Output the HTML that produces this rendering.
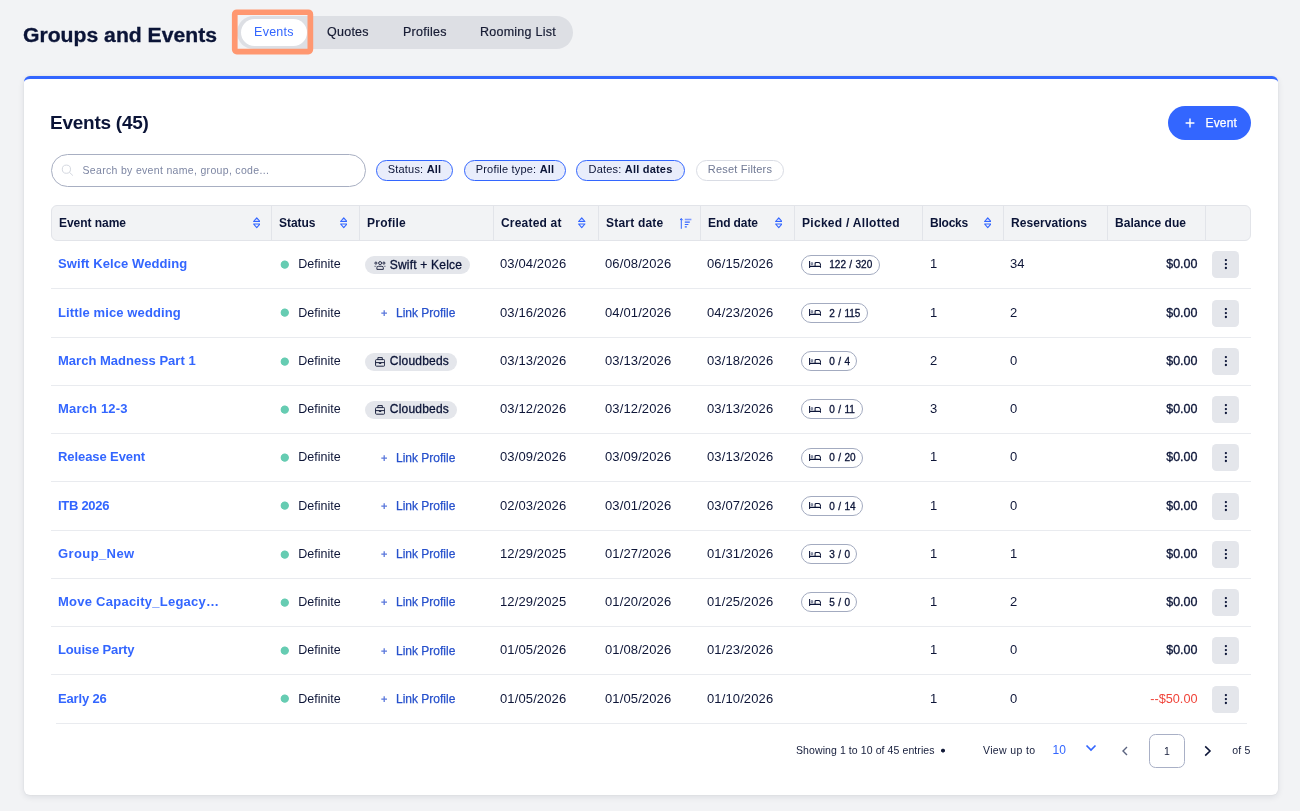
<!DOCTYPE html>
<html lang="en">
<head>
<meta charset="utf-8">
<title>Groups and Events</title>
<style>
*{box-sizing:border-box;margin:0;padding:0}
html,body{width:1300px;height:811px;overflow:hidden}
body{background:#f2f3f5;font-family:"Liberation Sans",sans-serif;color:#0b1437;position:relative}
#root{position:absolute;left:0;top:0;width:1300px;height:811px;will-change:transform}
.abs{position:absolute}
h1{position:absolute;left:23px;top:21px;font-size:20px;line-height:28px;font-weight:700;color:#0b1437;-webkit-text-stroke:.3px #0b1437;white-space:nowrap;transform-origin:0 50%;transform:translateY(-.5px) scaleX(1.058)}
.tabs{position:absolute;left:237px;top:16px;width:336px;height:33px;border-radius:17px;background:#dddfe4}
.tab{position:absolute;top:0;height:33px;line-height:32px;font-size:12.5px;letter-spacing:.25px;-webkit-text-stroke:.2px currentColor;color:#161b33;white-space:nowrap}
.tab.active{top:3px;left:3.7px;width:66.5px;height:27px;line-height:26px;border-radius:14px;background:#fff;color:#3366ff;text-align:center;-webkit-text-stroke:0}
.card{position:absolute;left:24px;top:76px;width:1254px;height:719px;background:#fff;border-top:3px solid #3366ff;border-radius:6px;box-shadow:0 2px 6px rgba(20,30,60,.10),0 0 2px rgba(20,30,60,.08)}
h2{position:absolute;left:50px;top:109px;font-size:19px;line-height:28px;font-weight:700;color:#0b1437;white-space:nowrap;letter-spacing:-.25px}
.btn{position:absolute;left:1168px;top:106px;width:83px;height:34px;border-radius:17px;background:#3366ff;color:#fff;font-size:12px;line-height:34px;-webkit-text-stroke:.25px #fff}
.search{position:absolute;left:51px;top:154px;width:315px;height:33px;border:1px solid #a8afc2;border-radius:16.5px;background:#fff}
.search span{position:absolute;left:30.5px;top:0;line-height:30.6px;font-size:10.5px;color:#7d86a3;white-space:nowrap;letter-spacing:.32px}
.chip{position:absolute;top:160px;height:21px;border:1px solid #3366ff;border-radius:11px;background:#e9edfb;font-size:11px;line-height:16.4px;letter-spacing:.2px;text-align:center;color:#0b1437;white-space:nowrap}
.chip b{font-weight:700}
.chip.reset{border-color:#d9dce4;background:#fff;color:#6f7893}

.thead{position:absolute;left:51px;top:205px;width:1200px;height:36px;background:#f2f3f5;border:1px solid #e2e4e9;border-radius:6px}
.thead .sep{position:absolute;top:0;width:1px;height:34px;background:#e2e4e9}
.th{position:absolute;top:0;line-height:34px;font-size:12px;font-weight:700;color:#0b1437;white-space:nowrap}
.srt{position:absolute;top:11px;width:7.5px;height:11.5px}
.srt.asc{width:12px;height:11px;top:11.7px}
.row{position:absolute;left:51px;width:1200px;height:48.25px;border-bottom:1px solid #e9ebef}
.row.last{border-bottom:0}
.row.last:after{content:"";position:absolute;left:5px;right:4px;bottom:0;height:1px;background:#e9ebef}
.row>*{position:absolute;white-space:nowrap}
.nm{left:7px;top:14.4px;font-size:13px;line-height:18px;font-weight:700;color:#3366ff}
.dot{left:228px;top:18px;width:11px;height:11px;background:radial-gradient(circle at 5.75px 5.6px,#66ccb2 3.7px,rgba(102,204,178,0) 4.5px)}
.c{top:14.4px;font-size:13px;line-height:18px;color:#0e1638;letter-spacing:.12px}
.st{left:247.3px;font-size:12.5px;letter-spacing:0}
.lp{left:345px;top:14.7px;font-size:12px;line-height:18px;color:#2751cc;-webkit-text-stroke:.25px #2751cc}
.lp svg{position:absolute;left:-15.2px;top:5.8px;width:6.4px;height:6.4px}
.pc{left:314px;top:15.25px;height:18px;border-radius:9px;background:#e4e6eb}
.pt{left:338.8px;top:14.7px;font-size:12px;line-height:18px;letter-spacing:.2px;color:#0b1437;-webkit-text-stroke:.3px #0b1437}
.pc .ic{position:absolute}
.pc .grp{left:9px;top:5.2px;width:12px;height:9px}
.pc .cas{left:10px;top:4.3px;width:10.2px;height:9.8px}
.pk{left:750px;top:13.6px;height:20px;border:1px solid #a3abc0;border-radius:10px}
.pkt{left:778.3px;top:15.3px;font-size:10px;line-height:18px;word-spacing:.6px;color:#0b1437;-webkit-text-stroke:.3px #0b1437}
.pk .bed{position:absolute;left:6.7px;top:5.4px;width:12.4px;height:7px}
.bal{right:53.5px;top:14.4px;font-size:12.5px;line-height:18px;color:#0b1437;-webkit-text-stroke:.3px #0b1437}
.bal.neg{color:#f0443a;-webkit-text-stroke:0;font-size:12.7px}
.kb{left:1161px;top:10.25px;width:27px;height:27px;border-radius:4.5px;background:#e4e6eb}
.kb svg{position:absolute;left:0;top:0;fill:#0b1437}
.pg{position:absolute;top:741.2px;font-size:10.5px;line-height:18px;color:#141c3a;white-space:nowrap}
.pgbox{position:absolute;left:1149px;top:734px;width:36px;height:33.5px;border:1px solid #a9b0c6;border-radius:6.5px;text-align:center;font-size:10.5px;line-height:32px;color:#141c3a}
</style>
</head>
<body>
<div id="root">
<h1>Groups and Events</h1>
<div class="tabs">
  <div class="tab active">Events</div>
  <div class="tab" style="left:90px">Quotes</div>
  <div class="tab" style="left:166px">Profiles</div>
  <div class="tab" style="left:243px">Rooming List</div>
</div>
<svg class="abs" style="left:226px;top:4px" width="94" height="56" viewBox="226 4 94 56"><rect x="234.75" y="12.25" width="75.6" height="39.3" rx="2" fill="none" stroke="#ff9770" stroke-width="5.7"/></svg>
<div class="card"></div>
<h2>Events (45)</h2>
<div class="btn"><svg class="abs" style="left:17px;top:12px" width="10" height="10" viewBox="0 0 10 10"><path d="M5 .6V9.4M.6 5H9.4" stroke="#fff" stroke-width="1.4" fill="none"/></svg><span class="abs" style="left:37.5px;letter-spacing:.15px">Event</span></div>
<div class="search"><svg class="abs" style="left:9px;top:9px" width="14" height="14" viewBox="0 0 14 14"><circle cx="5.4" cy="5.2" r="4.1" fill="none" stroke="#d4d8e0" stroke-width="1"/><path d="M8.4 8.3L11.9 11.6" stroke="#d4d8e0" stroke-width="1"/></svg><span>Search by event name, group, code...</span></div>
<div class="chip" style="left:376px;width:77px">Status: <b>All</b></div>
<div class="chip" style="left:464px;width:102px">Profile type: <b>All</b></div>
<div class="chip" style="left:576px;width:109px">Dates: <b>All dates</b></div>
<div class="chip reset" style="left:696px;width:88px">Reset Filters</div>
<!--TABLE-->
<div class="thead">
<span class="th" style="left:7px;letter-spacing:-0.04px">Event name</span>
<svg style="left:200.6px" class="srt" viewBox="0 0 7.5 11.5"><path d="M3.75 0.8 L6.9 4.5 H0.6 Z" fill="#c9d6ff" stroke="#3366ff" stroke-width="1.1" stroke-linejoin="round"/><path d="M3.75 10.7 L6.9 7 H0.6 Z" fill="none" stroke="#3366ff" stroke-width="1.1" stroke-linejoin="round"/></svg>
<i class="sep" style="left:219px"></i>
<span class="th" style="left:227px;letter-spacing:-0.04px">Status</span>
<svg style="left:287.9px" class="srt" viewBox="0 0 7.5 11.5"><path d="M3.75 0.8 L6.9 4.5 H0.6 Z" fill="#c9d6ff" stroke="#3366ff" stroke-width="1.1" stroke-linejoin="round"/><path d="M3.75 10.7 L6.9 7 H0.6 Z" fill="none" stroke="#3366ff" stroke-width="1.1" stroke-linejoin="round"/></svg>
<i class="sep" style="left:307px"></i>
<span class="th" style="left:315px;letter-spacing:0.23px">Profile</span>
<i class="sep" style="left:441px"></i>
<span class="th" style="left:449px;letter-spacing:0.2px">Created at</span>
<svg style="left:526.4px" class="srt" viewBox="0 0 7.5 11.5"><path d="M3.75 0.8 L6.9 4.5 H0.6 Z" fill="#c9d6ff" stroke="#3366ff" stroke-width="1.1" stroke-linejoin="round"/><path d="M3.75 10.7 L6.9 7 H0.6 Z" fill="none" stroke="#3366ff" stroke-width="1.1" stroke-linejoin="round"/></svg>
<i class="sep" style="left:546px"></i>
<span class="th" style="left:554px;letter-spacing:0.21px">Start date</span>
<svg style="left:628px" class="srt asc" viewBox="0 0 12 11"><path d="M1.3 10.8 V0.6 M0 2.2 L1.3 0.5 L2.6 2.2" fill="none" stroke="#3366ff" stroke-width="1"/><path d="M4.8 1.5 H11.4" stroke="#7f9bff" stroke-width="1.6"/><path d="M4.8 4.2 H9.8 M4.8 6.5 H8.4 M4.8 8.8 H6.8" fill="none" stroke="#3366ff" stroke-width="1.2"/></svg>
<i class="sep" style="left:648px"></i>
<span class="th" style="left:656px;letter-spacing:-0.1px">End date</span>
<svg style="left:722.6px" class="srt" viewBox="0 0 7.5 11.5"><path d="M3.75 0.8 L6.9 4.5 H0.6 Z" fill="#c9d6ff" stroke="#3366ff" stroke-width="1.1" stroke-linejoin="round"/><path d="M3.75 10.7 L6.9 7 H0.6 Z" fill="none" stroke="#3366ff" stroke-width="1.1" stroke-linejoin="round"/></svg>
<i class="sep" style="left:742px"></i>
<span class="th" style="left:750px;letter-spacing:0.29px">Picked / Allotted</span>
<i class="sep" style="left:870px"></i>
<span class="th" style="left:878px;letter-spacing:-0.22px">Blocks</span>
<svg style="left:931.8px" class="srt" viewBox="0 0 7.5 11.5"><path d="M3.75 0.8 L6.9 4.5 H0.6 Z" fill="#c9d6ff" stroke="#3366ff" stroke-width="1.1" stroke-linejoin="round"/><path d="M3.75 10.7 L6.9 7 H0.6 Z" fill="none" stroke="#3366ff" stroke-width="1.1" stroke-linejoin="round"/></svg>
<i class="sep" style="left:951px"></i>
<span class="th" style="left:959px;letter-spacing:0.06px">Reservations</span>
<i class="sep" style="left:1055px"></i>
<span class="th" style="left:1063px;letter-spacing:0.03px">Balance due</span>
<i class="sep" style="left:1153px"></i>
</div>
<div class="row" style="top:241.05px">
<a class="nm" style="letter-spacing:0.09px">Swift Kelce Wedding</a>
<i class="dot"></i><span class="c st">Definite</span>
<span class="pc" style="width:105px"><svg class="ic grp" viewBox="0 0 12 9"><g fill="none" stroke="#1d2440" stroke-width="0.95"><circle cx="6.1" cy="2.1" r="1.5"/><circle cx="1.9" cy="2.1" r="1.05"/><circle cx="9.9" cy="2.1" r="1.05"/><path d="M2.9 8.4 V6.7 Q2.9 5.3 4.3 5.3 H7.9 Q9.3 5.3 9.3 6.7 V8.4 Z"/><path d="M0.3 5.3 H2.3 M9.9 5.3 H11.6" stroke-width=".8" opacity=".7"/></g></svg></span><span class="pt">Swift + Kelce</span>
<span class="c" style="left:449px">03/04/2026</span><span class="c" style="left:554px">06/08/2026</span><span class="c" style="left:656px">06/15/2026</span>
<span class="pk" style="width:79px"><svg class="bed" viewBox="0 0 12.4 7"><g fill="none" stroke="#0b1437" stroke-width="1.05"><path d="M0.6 0.1 V6.9 M0.6 5.4 H11.8 V6.9 M6.1 5.4 V2.4 Q6.1 1.4 7.1 1.4 H9.6 Q10.6 1.4 11 2.3 L11.8 3.9 V5.4"/><path d="M2.1 1.7 H3.7 V3.7 H2.1 Z" stroke-width=".75" stroke="#59627f" fill="#c9cdd8"/></g></svg></span><span class="pkt">122 / 320</span>
<span class="c" style="left:879px">1</span><span class="c" style="left:959px">34</span>
<span class="bal">$0.00</span>
<span class="kb"><svg width="27" height="27" viewBox="0 0 27 27"><circle cx="13.9" cy="9.1" r="1.15"/><circle cx="13.9" cy="13.05" r="1.15"/><circle cx="13.9" cy="17" r="1.15"/></svg></span>
</div>
<div class="row" style="top:289.3px">
<a class="nm" style="letter-spacing:0.12px">Little mice wedding</a>
<i class="dot"></i><span class="c st">Definite</span>
<span class="lp"><svg viewBox="0 0 6.4 6.4"><path d="M3.2 .3V6.1M.3 3.2H6.1" stroke="#5b78dc" stroke-width="1.3" fill="none"/></svg>Link Profile</span>
<span class="c" style="left:449px">03/16/2026</span><span class="c" style="left:554px">04/01/2026</span><span class="c" style="left:656px">04/23/2026</span>
<span class="pk" style="width:67px"><svg class="bed" viewBox="0 0 12.4 7"><g fill="none" stroke="#0b1437" stroke-width="1.05"><path d="M0.6 0.1 V6.9 M0.6 5.4 H11.8 V6.9 M6.1 5.4 V2.4 Q6.1 1.4 7.1 1.4 H9.6 Q10.6 1.4 11 2.3 L11.8 3.9 V5.4"/><path d="M2.1 1.7 H3.7 V3.7 H2.1 Z" stroke-width=".75" stroke="#59627f" fill="#c9cdd8"/></g></svg></span><span class="pkt">2 / 115</span>
<span class="c" style="left:879px">1</span><span class="c" style="left:959px">2</span>
<span class="bal">$0.00</span>
<span class="kb"><svg width="27" height="27" viewBox="0 0 27 27"><circle cx="13.9" cy="9.1" r="1.15"/><circle cx="13.9" cy="13.05" r="1.15"/><circle cx="13.9" cy="17" r="1.15"/></svg></span>
</div>
<div class="row" style="top:337.55px">
<a class="nm" style="letter-spacing:0.02px">March Madness Part 1</a>
<i class="dot"></i><span class="c st">Definite</span>
<span class="pc" style="width:92px"><svg class="ic cas" viewBox="0 0 10.2 9.8"><g fill="none" stroke="#1d2440" stroke-width="1"><rect x=".55" y="2.6" width="9.1" height="6.6" rx=".9"/><path d="M2.9 2.6 V.6 H7.3 V2.6 M.55 5.6 H9.65 M4.2 5.7 V6.5 H6 V5.7"/></g></svg></span><span class="pt">Cloudbeds</span>
<span class="c" style="left:449px">03/13/2026</span><span class="c" style="left:554px">03/13/2026</span><span class="c" style="left:656px">03/18/2026</span>
<span class="pk" style="width:56px"><svg class="bed" viewBox="0 0 12.4 7"><g fill="none" stroke="#0b1437" stroke-width="1.05"><path d="M0.6 0.1 V6.9 M0.6 5.4 H11.8 V6.9 M6.1 5.4 V2.4 Q6.1 1.4 7.1 1.4 H9.6 Q10.6 1.4 11 2.3 L11.8 3.9 V5.4"/><path d="M2.1 1.7 H3.7 V3.7 H2.1 Z" stroke-width=".75" stroke="#59627f" fill="#c9cdd8"/></g></svg></span><span class="pkt">0 / 4</span>
<span class="c" style="left:879px">2</span><span class="c" style="left:959px">0</span>
<span class="bal">$0.00</span>
<span class="kb"><svg width="27" height="27" viewBox="0 0 27 27"><circle cx="13.9" cy="9.1" r="1.15"/><circle cx="13.9" cy="13.05" r="1.15"/><circle cx="13.9" cy="17" r="1.15"/></svg></span>
</div>
<div class="row" style="top:385.8px">
<a class="nm" style="letter-spacing:0.17px">March 12-3</a>
<i class="dot"></i><span class="c st">Definite</span>
<span class="pc" style="width:92px"><svg class="ic cas" viewBox="0 0 10.2 9.8"><g fill="none" stroke="#1d2440" stroke-width="1"><rect x=".55" y="2.6" width="9.1" height="6.6" rx=".9"/><path d="M2.9 2.6 V.6 H7.3 V2.6 M.55 5.6 H9.65 M4.2 5.7 V6.5 H6 V5.7"/></g></svg></span><span class="pt">Cloudbeds</span>
<span class="c" style="left:449px">03/12/2026</span><span class="c" style="left:554px">03/12/2026</span><span class="c" style="left:656px">03/13/2026</span>
<span class="pk" style="width:62px"><svg class="bed" viewBox="0 0 12.4 7"><g fill="none" stroke="#0b1437" stroke-width="1.05"><path d="M0.6 0.1 V6.9 M0.6 5.4 H11.8 V6.9 M6.1 5.4 V2.4 Q6.1 1.4 7.1 1.4 H9.6 Q10.6 1.4 11 2.3 L11.8 3.9 V5.4"/><path d="M2.1 1.7 H3.7 V3.7 H2.1 Z" stroke-width=".75" stroke="#59627f" fill="#c9cdd8"/></g></svg></span><span class="pkt">0 / 11</span>
<span class="c" style="left:879px">3</span><span class="c" style="left:959px">0</span>
<span class="bal">$0.00</span>
<span class="kb"><svg width="27" height="27" viewBox="0 0 27 27"><circle cx="13.9" cy="9.1" r="1.15"/><circle cx="13.9" cy="13.05" r="1.15"/><circle cx="13.9" cy="17" r="1.15"/></svg></span>
</div>
<div class="row" style="top:434.05px">
<a class="nm" style="letter-spacing:-0.08px">Release Event</a>
<i class="dot"></i><span class="c st">Definite</span>
<span class="lp"><svg viewBox="0 0 6.4 6.4"><path d="M3.2 .3V6.1M.3 3.2H6.1" stroke="#5b78dc" stroke-width="1.3" fill="none"/></svg>Link Profile</span>
<span class="c" style="left:449px">03/09/2026</span><span class="c" style="left:554px">03/09/2026</span><span class="c" style="left:656px">03/13/2026</span>
<span class="pk" style="width:62px"><svg class="bed" viewBox="0 0 12.4 7"><g fill="none" stroke="#0b1437" stroke-width="1.05"><path d="M0.6 0.1 V6.9 M0.6 5.4 H11.8 V6.9 M6.1 5.4 V2.4 Q6.1 1.4 7.1 1.4 H9.6 Q10.6 1.4 11 2.3 L11.8 3.9 V5.4"/><path d="M2.1 1.7 H3.7 V3.7 H2.1 Z" stroke-width=".75" stroke="#59627f" fill="#c9cdd8"/></g></svg></span><span class="pkt">0 / 20</span>
<span class="c" style="left:879px">1</span><span class="c" style="left:959px">0</span>
<span class="bal">$0.00</span>
<span class="kb"><svg width="27" height="27" viewBox="0 0 27 27"><circle cx="13.9" cy="9.1" r="1.15"/><circle cx="13.9" cy="13.05" r="1.15"/><circle cx="13.9" cy="17" r="1.15"/></svg></span>
</div>
<div class="row" style="top:482.3px">
<a class="nm" style="letter-spacing:-0.29px">ITB 2026</a>
<i class="dot"></i><span class="c st">Definite</span>
<span class="lp"><svg viewBox="0 0 6.4 6.4"><path d="M3.2 .3V6.1M.3 3.2H6.1" stroke="#5b78dc" stroke-width="1.3" fill="none"/></svg>Link Profile</span>
<span class="c" style="left:449px">02/03/2026</span><span class="c" style="left:554px">03/01/2026</span><span class="c" style="left:656px">03/07/2026</span>
<span class="pk" style="width:62px"><svg class="bed" viewBox="0 0 12.4 7"><g fill="none" stroke="#0b1437" stroke-width="1.05"><path d="M0.6 0.1 V6.9 M0.6 5.4 H11.8 V6.9 M6.1 5.4 V2.4 Q6.1 1.4 7.1 1.4 H9.6 Q10.6 1.4 11 2.3 L11.8 3.9 V5.4"/><path d="M2.1 1.7 H3.7 V3.7 H2.1 Z" stroke-width=".75" stroke="#59627f" fill="#c9cdd8"/></g></svg></span><span class="pkt">0 / 14</span>
<span class="c" style="left:879px">1</span><span class="c" style="left:959px">0</span>
<span class="bal">$0.00</span>
<span class="kb"><svg width="27" height="27" viewBox="0 0 27 27"><circle cx="13.9" cy="9.1" r="1.15"/><circle cx="13.9" cy="13.05" r="1.15"/><circle cx="13.9" cy="17" r="1.15"/></svg></span>
</div>
<div class="row" style="top:530.55px">
<a class="nm" style="letter-spacing:0.4px">Group_New</a>
<i class="dot"></i><span class="c st">Definite</span>
<span class="lp"><svg viewBox="0 0 6.4 6.4"><path d="M3.2 .3V6.1M.3 3.2H6.1" stroke="#5b78dc" stroke-width="1.3" fill="none"/></svg>Link Profile</span>
<span class="c" style="left:449px">12/29/2025</span><span class="c" style="left:554px">01/27/2026</span><span class="c" style="left:656px">01/31/2026</span>
<span class="pk" style="width:56px"><svg class="bed" viewBox="0 0 12.4 7"><g fill="none" stroke="#0b1437" stroke-width="1.05"><path d="M0.6 0.1 V6.9 M0.6 5.4 H11.8 V6.9 M6.1 5.4 V2.4 Q6.1 1.4 7.1 1.4 H9.6 Q10.6 1.4 11 2.3 L11.8 3.9 V5.4"/><path d="M2.1 1.7 H3.7 V3.7 H2.1 Z" stroke-width=".75" stroke="#59627f" fill="#c9cdd8"/></g></svg></span><span class="pkt">3 / 0</span>
<span class="c" style="left:879px">1</span><span class="c" style="left:959px">1</span>
<span class="bal">$0.00</span>
<span class="kb"><svg width="27" height="27" viewBox="0 0 27 27"><circle cx="13.9" cy="9.1" r="1.15"/><circle cx="13.9" cy="13.05" r="1.15"/><circle cx="13.9" cy="17" r="1.15"/></svg></span>
</div>
<div class="row" style="top:578.8px">
<a class="nm" style="letter-spacing:0.25px">Move Capacity_Legacy&hellip;</a>
<i class="dot"></i><span class="c st">Definite</span>
<span class="lp"><svg viewBox="0 0 6.4 6.4"><path d="M3.2 .3V6.1M.3 3.2H6.1" stroke="#5b78dc" stroke-width="1.3" fill="none"/></svg>Link Profile</span>
<span class="c" style="left:449px">12/29/2025</span><span class="c" style="left:554px">01/20/2026</span><span class="c" style="left:656px">01/25/2026</span>
<span class="pk" style="width:56px"><svg class="bed" viewBox="0 0 12.4 7"><g fill="none" stroke="#0b1437" stroke-width="1.05"><path d="M0.6 0.1 V6.9 M0.6 5.4 H11.8 V6.9 M6.1 5.4 V2.4 Q6.1 1.4 7.1 1.4 H9.6 Q10.6 1.4 11 2.3 L11.8 3.9 V5.4"/><path d="M2.1 1.7 H3.7 V3.7 H2.1 Z" stroke-width=".75" stroke="#59627f" fill="#c9cdd8"/></g></svg></span><span class="pkt">5 / 0</span>
<span class="c" style="left:879px">1</span><span class="c" style="left:959px">2</span>
<span class="bal">$0.00</span>
<span class="kb"><svg width="27" height="27" viewBox="0 0 27 27"><circle cx="13.9" cy="9.1" r="1.15"/><circle cx="13.9" cy="13.05" r="1.15"/><circle cx="13.9" cy="17" r="1.15"/></svg></span>
</div>
<div class="row" style="top:627.05px">
<a class="nm" style="letter-spacing:-0.14px">Louise Party</a>
<i class="dot"></i><span class="c st">Definite</span>
<span class="lp"><svg viewBox="0 0 6.4 6.4"><path d="M3.2 .3V6.1M.3 3.2H6.1" stroke="#5b78dc" stroke-width="1.3" fill="none"/></svg>Link Profile</span>
<span class="c" style="left:449px">01/05/2026</span><span class="c" style="left:554px">01/08/2026</span><span class="c" style="left:656px">01/23/2026</span>
<span class="c" style="left:879px">1</span><span class="c" style="left:959px">0</span>
<span class="bal">$0.00</span>
<span class="kb"><svg width="27" height="27" viewBox="0 0 27 27"><circle cx="13.9" cy="9.1" r="1.15"/><circle cx="13.9" cy="13.05" r="1.15"/><circle cx="13.9" cy="17" r="1.15"/></svg></span>
</div>
<div class="row last" style="top:675.3px">
<a class="nm" style="letter-spacing:-0.15px">Early 26</a>
<i class="dot"></i><span class="c st">Definite</span>
<span class="lp"><svg viewBox="0 0 6.4 6.4"><path d="M3.2 .3V6.1M.3 3.2H6.1" stroke="#5b78dc" stroke-width="1.3" fill="none"/></svg>Link Profile</span>
<span class="c" style="left:449px">01/05/2026</span><span class="c" style="left:554px">01/05/2026</span><span class="c" style="left:656px">01/10/2026</span>
<span class="c" style="left:879px">1</span><span class="c" style="left:959px">0</span>
<span class="bal neg">--$50.00</span>
<span class="kb"><svg width="27" height="27" viewBox="0 0 27 27"><circle cx="13.9" cy="9.1" r="1.15"/><circle cx="13.9" cy="13.05" r="1.15"/><circle cx="13.9" cy="17" r="1.15"/></svg></span>
</div>
<!--/TABLE-->
<span class="pg" style="left:796px;letter-spacing:.09px">Showing 1 to 10 of 45 entries</span>
<span class="pg" style="left:940px;top:748px;width:6px;height:6px;font-size:0;background:radial-gradient(circle at 3px 2.6px,#141c3a 1.6px,rgba(20,28,58,0) 2.3px)">&bull;</span>
<span class="pg" style="left:983px;letter-spacing:.35px">View up to</span>
<span class="pg" style="left:1052.5px;color:#3366ff;font-size:12px">10</span>
<svg class="abs" style="left:1085px;top:744px" width="12" height="9" viewBox="0 0 12 9"><path d="M1.5 1.5 L6 6 L10.5 1.5" fill="none" stroke="#3366ff" stroke-width="1.7"/></svg>
<svg class="abs" style="left:1121px;top:746px" width="8" height="10" viewBox="0 0 8 10"><path d="M6 1 L2 5 L6 9" fill="none" stroke="#5a637f" stroke-width="1.4"/></svg>
<div class="pgbox">1</div>
<svg class="abs" style="left:1203px;top:745px" width="9" height="12" viewBox="0 0 9 12"><path d="M2.2 1.4 L7 6 L2.2 10.6" fill="none" stroke="#0b1437" stroke-width="1.55"/></svg>
<span class="pg" style="left:1232.3px;letter-spacing:.2px">of 5</span>

</div>
</body>
</html>
